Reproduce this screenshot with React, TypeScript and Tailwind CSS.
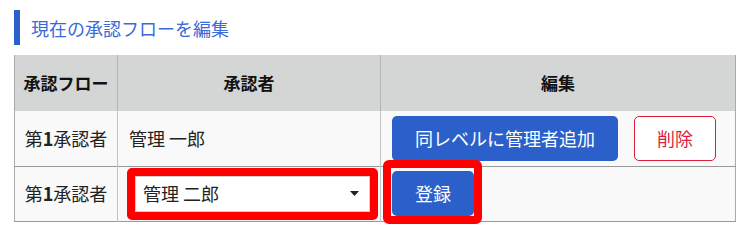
import React from "react";

export default function App() {
  const font = { fontFamily: '"Noto Sans CJK JP", "Noto Sans", sans-serif' };
  return (
    <div className="w-[754px] h-[243px] bg-white pt-[10px] pl-[14px] text-[#222]" style={font}>
      <div className="flex items-center h-[35px] border-l-[6px] border-[#2b5fcc] pl-[11px] text-[18px] leading-none text-[#3b6ad6]">
        現在の承認フローを編集
      </div>
      <table className="mt-[10px] w-[722px] table-fixed border-collapse border-l border-r border-[#aaaaaa]">
        <colgroup>
          <col className="w-[103px]" />
          <col className="w-[263px]" />
          <col />
        </colgroup>
        <thead>
          <tr className="h-[56px] bg-[#d4d5d5]">
            <th className="border-r border-[#b4b4b4] text-[17px] font-bold text-[#111] text-center">承認フロー</th>
            <th className="border-r border-[#b4b4b4] text-[17px] font-bold text-[#111] text-center">承認者</th>
            <th className="text-[17px] font-bold text-[#111] text-center">編集</th>
          </tr>
        </thead>
        <tbody>
          <tr className="h-[55px] bg-[#f9f9f9] border-b border-[#999999]">
            <td className="border-r border-[#c4c4c4] text-center text-[18px]">
              第<span className="font-bold">1</span>承認者
            </td>
            <td className="border-r border-[#c4c4c4] pl-[11px] text-[18px]">管理 一郎</td>
            <td className="pl-[11px]">
              <div className="flex items-center gap-[16px]">
                <button className="h-[45px] w-[226px] rounded-[5px] bg-[#2b5fc9] text-white text-[18px]">
                  同レベルに管理者追加
                </button>
                <button className="h-[45px] w-[82px] rounded-[5px] border border-[#dc1e3c] bg-white text-[#dc1e3c] text-[18px]">
                  削除
                </button>
              </div>
            </td>
          </tr>
          <tr className="h-[55px] bg-[#f9f9f9] border-b border-[#999999]">
            <td className="border-r border-[#c4c4c4] text-center text-[18px]">
              第<span className="font-bold">1</span>承認者
            </td>
            <td className="border-r border-[#c4c4c4] pl-[9px]">
              <div className="w-[251px] rounded-[5px] border-[8px] border-[#ff0000]">
                <div className="flex h-[36px] items-center justify-between bg-white border border-[#d0d0d0] pl-[7px] pr-[10px] text-[18px]">
                  <span>管理 二郎</span>
                  <svg width="9" height="5" viewBox="0 0 9 5">
                    <path d="M0 0 L9 0 L4.5 5 Z" fill="#222" />
                  </svg>
                </div>
              </div>
            </td>
            <td className="pl-[11px]">
              <div className="relative inline-block align-middle">
                <button className="h-[45px] w-[82px] rounded-[5px] bg-[#2b5fc9] text-white text-[18px]">登録</button>
                <span className="pointer-events-none absolute -top-[11px] -bottom-[8px] -left-[9px] -right-[8px] rounded-[6px] border-[8px] border-[#ff0000]" />
              </div>
            </td>
          </tr>
        </tbody>
      </table>
    </div>
  );
}
